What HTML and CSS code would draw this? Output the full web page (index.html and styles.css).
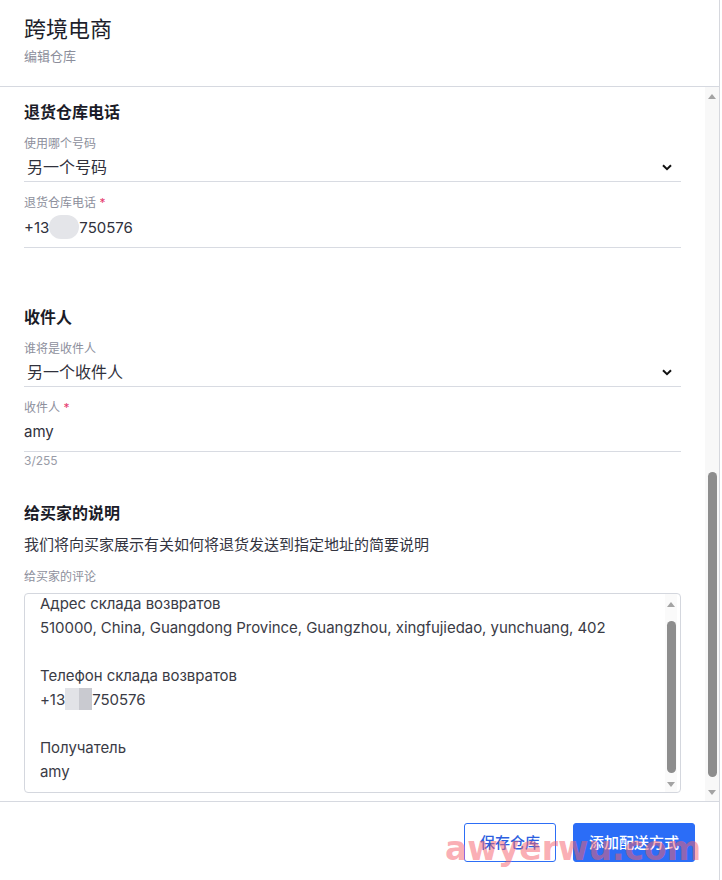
FILE: index.html
```html
<!DOCTYPE html>
<html lang="zh-CN">
<head>
<meta charset="utf-8">
<title>编辑仓库</title>
<link rel="stylesheet" href="styles.css">
</head>
<body>
<div class="panel">
  <header class="head">
    <h1 class="title">跨境电商</h1>
    <div class="subtitle">编辑仓库</div>
  </header>

  <div class="body">
    <div class="content">
      <section class="section">
        <h2 class="sec-title">退货仓库电话</h2>
        <div class="field">
          <div class="label">使用哪个号码</div>
          <div class="select">
            <span class="select-value">另一个号码</span>
            <svg class="chev" viewBox="0 0 10 7" width="10" height="7"><path d="M1 1.2 L5 5.2 L9 1.2" fill="none" stroke="#111" stroke-width="2"/></svg>
          </div>
        </div>
        <div class="field field-phone">
          <div class="label">退货仓库电话 <span class="req">*</span></div>
          <div class="input"><span class="value">+13<span class="blur"></span>750576</span></div>
        </div>
      </section>

      <section class="section">
        <h2 class="sec-title">收件人</h2>
        <div class="field">
          <div class="label">谁将是收件人</div>
          <div class="select">
            <span class="select-value">另一个收件人</span>
            <svg class="chev" viewBox="0 0 10 7" width="10" height="7"><path d="M1 1.2 L5 5.2 L9 1.2" fill="none" stroke="#111" stroke-width="2"/></svg>
          </div>
        </div>
        <div class="field">
          <div class="label">收件人 <span class="req">*</span></div>
          <div class="input"><span class="value">amy</span></div>
          <div class="counter">3/255</div>
        </div>
      </section>

      <section class="section section-last">
        <h2 class="sec-title">给买家的说明</h2>
        <p class="desc">我们将向买家展示有关如何将退货发送到指定地址的简要说明</p>
        <div class="label label-ta">给买家的评论</div>
        <div class="textarea">
          <div class="ta-text">
            <div class="ta-line">Адрес склада возвратов</div>
            <div class="ta-line">510000, China, Guangdong Province, Guangzhou, xingfujiedao, yunchuang, 402</div>
            <div class="ta-line"></div>
            <div class="ta-line">Телефон склада возвратов</div>
            <div class="ta-line">+13<span class="mosaic"><span class="m1"></span><span class="m2"></span></span>750576</div>
            <div class="ta-line"></div>
            <div class="ta-line">Получатель</div>
            <div class="ta-line">amy</div>
          </div>
          <div class="sbar sbar-ta">
            <div class="arrow arrow-up"></div>
            <div class="track"><div class="thumb thumb-ta"></div></div>
            <div class="arrow arrow-down"></div>
          </div>
        </div>
      </section>
    </div>

    <div class="sbar sbar-main">
      <div class="arrow arrow-up"></div>
      <div class="track"><div class="thumb thumb-main"></div></div>
      <div class="arrow arrow-down"></div>
    </div>
  </div>

  <footer class="foot">
    <button class="btn btn-outline">保存仓库</button>
    <button class="btn btn-primary">添加配送方式</button>
  </footer>

  <div class="watermark">awyerwu.com</div>
</div>
</body>
</html>
```

FILE: styles.css
```css
* { box-sizing: border-box; }

html, body {
  margin: 0;
  padding: 0;
  background: #fff;
}

body {
  font-family: Inter, "Noto Sans CJK SC", sans-serif;
  color: #333340;
}

.panel {
  position: relative;
  width: 720px;
  height: 880px;
  border-right: 1px solid #d6d8de;
  display: flex;
  flex-direction: column;
  overflow: hidden;
}

/* header */
.head {
  height: 87px;
  padding: 14px 24px 0;
  border-bottom: 1px solid #d6d9e0;
  flex: none;
}
.title {
  margin: 0;
  font-size: 22px;
  line-height: 30px;
  font-weight: 400;
  color: #1e1f2b;
}
.subtitle {
  margin-top: 2px;
  font-size: 13px;
  line-height: 20px;
  color: #8c8e9b;
}

/* body */
.body {
  flex: 1;
  display: flex;
  min-height: 0;
}
.content {
  flex: 1;
  min-width: 0;
  padding: 13px 24px 0;
  overflow: hidden;
}

.section + .section { margin-top: 32px; }

.sec-title {
  margin: 0;
  font-size: 16px;
  line-height: 24px;
  font-weight: 700;
  color: #1b1c28;
}

.field { margin-top: 11px; }
.field + .field { margin-top: 12px; }
.field-phone { padding-bottom: 25px; }

.label {
  font-size: 12px;
  line-height: 18px;
  color: #8d8f9c;
}
.req { color: #e53a6e; }

.select {
  height: 29px;
  display: flex;
  align-items: center;
  padding-left: 3px;
  border-bottom: 1px solid #d8dbe2;
}
.select-value {
  flex: 1;
  font-size: 16px;
  line-height: 24px;
  color: #30313c;
}
.chev { margin-right: 9px; }

.input {
  padding: 3px 0 7px;
  border-bottom: 1px solid #d8dbe2;
}
.value {
  display: block;
  font-size: 15px;
  line-height: 24px;
  color: #30313c;
}
.blur {
  display: inline-block;
  width: 30px;
  height: 24px;
  vertical-align: -6px;
  border-radius: 12px;
  background: #e4e5e9;
}

.counter {
  padding-top: 1px;
  font-size: 12px;
  line-height: 16px;
  color: #9a9ca7;
}

.desc {
  margin: 9px 0 0;
  font-size: 15px;
  line-height: 22px;
  color: #33343f;
}
.label-ta { margin-top: 12px; }

.textarea {
  margin-top: 7px;
  height: 200px;
  border: 1px solid #d4d7de;
  border-radius: 4px;
  display: flex;
  overflow: hidden;
}
.ta-text {
  flex: 1;
  padding-left: 15px;
  margin-top: -2px;
  font-size: 15px;
  line-height: 24px;
  letter-spacing: -0.05px;
  color: #3a3b45;
  overflow: hidden;
}
.ta-line {
  height: 24px;
  white-space: nowrap;
}
.mosaic {
  display: inline-flex;
  width: 27px;
  height: 22px;
  vertical-align: -5px;
}
.m1 { flex: 1; background: #e2e3e7; }
.m2 { flex: 1; background: #c9cad0; }

/* scrollbars */
.sbar {
  display: flex;
  flex-direction: column;
  align-items: center;
  flex: none;
}
.sbar-main {
  width: 14px;
  background: #f8f8f8;
  padding: 1px 0;
}
.sbar-ta {
  width: 12px;
  margin-right: 3px;
  padding-top: 2px;
  background: #fafafa;
}
.arrow {
  height: 16px;
  width: 100%;
  display: flex;
  align-items: center;
  justify-content: center;
}
.arrow::before {
  content: "";
  width: 0;
  height: 0;
  border-left: 4px solid transparent;
  border-right: 4px solid transparent;
}
.arrow-up::before { border-bottom: 5px solid #a3a3a3; }
.arrow-down::before { border-top: 5px solid #a3a3a3; }
.track {
  flex: 1;
  width: 100%;
  display: flex;
  flex-direction: column;
  align-items: center;
}
.thumb {
  width: 9px;
  background: #8d8d8d;
  border-radius: 5px;
}
.thumb-main {
  margin-top: auto;
  margin-bottom: 7px;
  height: 305px;
}
.thumb-ta {
  margin-top: 9px;
  height: 152px;
}

/* footer */
.foot {
  flex: none;
  height: 79px;
  border-top: 1px solid #d6d9e0;
  padding: 21px 24px 0;
  display: flex;
  justify-content: flex-end;
  align-items: flex-start;
  gap: 17px;
}
.btn {
  height: 39px;
  padding: 0 15px;
  border-radius: 3px;
  font-family: Inter, "Noto Sans CJK SC", sans-serif;
  font-size: 15px;
  font-weight: 500;
  line-height: 22px;
  cursor: pointer;
}
.btn-outline {
  background: #fff;
  border: 1px solid #2d6ef6;
  color: #2d5fe0;
}
.btn-primary {
  background: #2b6df7;
  border: 1px solid #2b6df7;
  color: #fff;
}

.watermark {
  position: absolute;
  left: 445px;
  top: 832px;
  font-family: "DejaVu Sans", sans-serif;
  font-weight: 700;
  font-size: 33px;
  line-height: 33px;
  color: rgba(246, 96, 108, 0.52);
  pointer-events: none;
  white-space: nowrap;
}
```
